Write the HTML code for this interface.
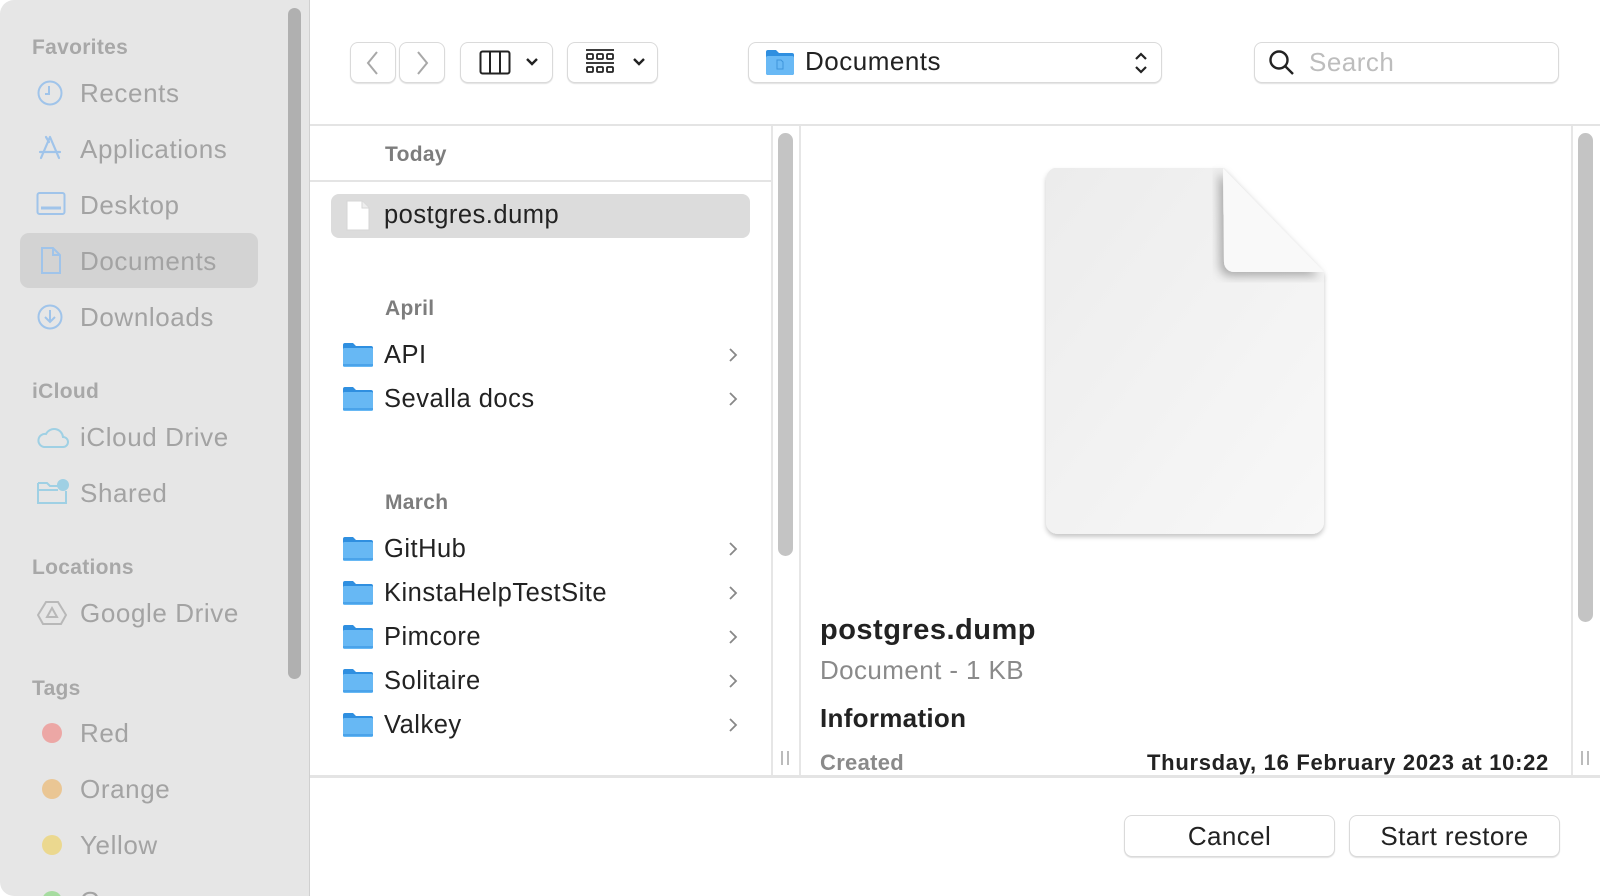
<!DOCTYPE html>
<html><head><meta charset="utf-8">
<style>
*{margin:0;padding:0;box-sizing:border-box}
html,body{width:1600px;height:896px;overflow:hidden;background:#fff;font-family:"Liberation Sans",sans-serif}
.a{position:absolute;white-space:nowrap}
#side{position:absolute;left:0;top:0;width:310px;height:896px;background:#e6e6e6;border-top-left-radius:14px;border-bottom-left-radius:14px;border-right:1px solid #d0d0d0;overflow:hidden}
.h{font-size:21px;font-weight:bold;color:#a8a8a8;line-height:26px;letter-spacing:.3px}
.it{font-size:26px;color:#a3a3a3;line-height:32px;letter-spacing:.6px}
.ic{position:absolute;left:36px}
.btn{position:absolute;background:#fff;border:1px solid #dadada;border-radius:8px;box-shadow:0 1px 1px rgba(0,0,0,.12)}
.row{font-size:25.5px;color:#222;line-height:32px;letter-spacing:.5px}
.sh{font-size:21px;font-weight:bold;color:#7d7d7d;line-height:26px;letter-spacing:.3px}
.chev{position:absolute;left:727px;width:12px;height:16px}
.fold{position:absolute;left:343px;width:30px;height:24px}
</style></head><body>
<div id="side">
  <div class="a" style="left:288px;top:8px;width:13px;height:671px;background:#b0b0b0;border-radius:7px"></div>
  <div class="a h" style="left:32px;top:35px">Favorites</div>
  <svg class="ic" style="top:79px" width="28" height="28" viewBox="0 0 28 28" fill="none" stroke="#a0c4ea" stroke-width="2"><circle cx="14" cy="14" r="11.5"/><path d="M13 7v8H9"/></svg>
  <div class="a it" style="left:80px;top:77px">Recents</div>
  <svg class="ic" style="top:134px" width="28" height="28" viewBox="0 0 28 28" fill="none" stroke="#a0c4ea" stroke-width="2.2" stroke-linecap="round"><path d="M14 3L5 24M14 3l9 21M4 18h20M10 3l3 5"/></svg>
  <div class="a it" style="left:80px;top:133px">Applications</div>
  <svg class="ic" style="top:191px" width="30" height="26" viewBox="0 0 30 26" fill="none" stroke="#a0c4ea" stroke-width="2"><rect x="1.5" y="2" width="27" height="21" rx="2"/><path d="M5 17h20" stroke-width="3"/></svg>
  <div class="a it" style="left:80px;top:189px">Desktop</div>
  <div class="a" style="left:20px;top:233px;width:238px;height:55px;background:#d3d3d3;border-radius:9px"></div>
  <svg class="ic" style="left:40px;top:246px" width="22" height="29" viewBox="0 0 22 29" fill="none" stroke="#a0c4ea" stroke-width="2"><path d="M2 2h11l7 7v18H2z M13 2v7h7"/></svg>
  <div class="a it" style="left:80px;top:245px">Documents</div>
  <svg class="ic" style="top:303px" width="28" height="28" viewBox="0 0 28 28" fill="none" stroke="#a0c4ea" stroke-width="2"><circle cx="14" cy="14" r="11.5"/><path d="M14 7v12M9 14l5 5 5-5"/></svg>
  <div class="a it" style="left:80px;top:301px">Downloads</div>
  <div class="a h" style="left:32px;top:379px">iCloud</div>
  <svg class="ic" style="top:424px" width="34" height="26" viewBox="0 0 34 26" fill="none" stroke="#9fd0e4" stroke-width="2"><path d="M8 23h19a5 5 0 0 0 0-10 9 9 0 0 0-17-3 6 6 0 0 0-2 13z"/></svg>
  <div class="a it" style="left:80px;top:421px">iCloud Drive</div>
  <svg class="ic" style="top:478px" width="34" height="28" viewBox="0 0 34 28" fill="none" stroke="#9fd0e4" stroke-width="2"><path d="M2 5h9l3 3h8 M2 5v20h28v-12 M2 12h20"/><circle cx="27" cy="7" r="5" fill="#9fd0e4"/></svg>
  <div class="a it" style="left:80px;top:477px">Shared</div>
  <div class="a h" style="left:32px;top:555px">Locations</div>
  <svg class="ic" style="left:37px;top:600px" width="30" height="26" viewBox="0 0 30 26" fill="none" stroke="#b8b8b8" stroke-width="2"><path d="M9 2h12l8 13-5 9H6l-5-9z M15 8l5 9H10z"/></svg>
  <div class="a it" style="left:80px;top:597px">Google Drive</div>
  <div class="a h" style="left:32px;top:676px">Tags</div>
  <div class="a" style="left:42px;top:723px;width:20px;height:20px;border-radius:50%;background:#eca7a5"></div>
  <div class="a it" style="left:80px;top:717px">Red</div>
  <div class="a" style="left:42px;top:779px;width:20px;height:20px;border-radius:50%;background:#eac694"></div>
  <div class="a it" style="left:80px;top:773px">Orange</div>
  <div class="a" style="left:42px;top:835px;width:20px;height:20px;border-radius:50%;background:#ebd88f"></div>
  <div class="a it" style="left:80px;top:829px">Yellow</div>
  <div class="a" style="left:42px;top:891px;width:20px;height:20px;border-radius:50%;background:#a6dca0"></div>
  <div class="a it" style="left:80px;top:885px">Green</div>
</div>

<!-- toolbar -->
<div class="btn" style="left:350px;top:42px;width:46px;height:41px"></div>
<div class="btn" style="left:399px;top:42px;width:46px;height:41px"></div>
<svg class="a" style="left:364px;top:50px" width="18" height="26" viewBox="0 0 18 26" fill="none" stroke="#a8a8a8" stroke-width="2"><path d="M13 2L4 13l9 11"/></svg>
<svg class="a" style="left:413px;top:50px" width="18" height="26" viewBox="0 0 18 26" fill="none" stroke="#a8a8a8" stroke-width="2"><path d="M5 2l9 11-9 11"/></svg>
<div class="btn" style="left:460px;top:42px;width:93px;height:41px"></div>
<svg class="a" style="left:479px;top:50px" width="32" height="25" viewBox="0 0 32 25" fill="none" stroke="#222" stroke-width="2"><rect x="1.5" y="1.5" width="29" height="22" rx="2"/><path d="M11 2v21M21 2v21"/></svg>
<svg class="a" style="left:525px;top:57px" width="14" height="10" viewBox="0 0 14 10" fill="none" stroke="#222" stroke-width="2.4"><path d="M2 2l5 5 5-5"/></svg>
<div class="btn" style="left:567px;top:42px;width:91px;height:41px"></div>
<svg class="a" style="left:585px;top:48px" width="30" height="28" viewBox="0 0 30 28" fill="none" stroke="#222" stroke-width="1.8"><path d="M1 2h28M1 15h28"/><rect x="2" y="6" width="6" height="5" rx="1"/><rect x="12" y="6" width="6" height="5" rx="1"/><rect x="22" y="6" width="6" height="5" rx="1"/><rect x="2" y="19" width="6" height="5" rx="1"/><rect x="12" y="19" width="6" height="5" rx="1"/><rect x="22" y="19" width="6" height="5" rx="1"/></svg>
<svg class="a" style="left:632px;top:57px" width="14" height="10" viewBox="0 0 14 10" fill="none" stroke="#222" stroke-width="2.4"><path d="M2 2l5 5 5-5"/></svg>
<div class="btn" style="left:748px;top:42px;width:414px;height:41px"></div>
<svg class="a" style="left:765px;top:49px" width="30" height="27" viewBox="0 0 30 27"><path d="M1 3a2 2 0 0 1 2-2h8l3 3h13a2 2 0 0 1 2 2v18a2 2 0 0 1-2 2H3a2 2 0 0 1-2-2z" fill="#2f8fe0"/><rect x="1" y="7" width="28" height="19" rx="2" fill="#69b9f5"/><path d="M12 11h4l2 2v7h-6z" fill="none" stroke="#3e95db" stroke-width="1"/></svg>
<div class="a" style="left:805px;top:44px;font-size:26px;line-height:34px;color:#222;letter-spacing:.5px">Documents</div>
<svg class="a" style="left:1134px;top:50px" width="14" height="26" viewBox="0 0 14 26" fill="none" stroke="#222" stroke-width="2.2"><path d="M2 9l5-5 5 5M2 17l5 5 5-5"/></svg>
<div class="btn" style="left:1254px;top:42px;width:305px;height:41px"></div>
<svg class="a" style="left:1268px;top:49px" width="28" height="28" viewBox="0 0 28 28" fill="none" stroke="#222" stroke-width="2.4"><circle cx="11" cy="11" r="8.5"/><path d="M17 17l8 8"/></svg>
<div class="a" style="left:1309px;top:45px;font-size:26px;line-height:34px;color:#bdbdbd;letter-spacing:.5px">Search</div>

<div class="a" style="left:310px;top:124px;width:1290px;height:2px;background:#e4e4e4"></div>

<!-- column 1 -->
<div class="a sh" style="left:385px;top:142px">Today</div>
<div class="a" style="left:310px;top:180px;width:462px;height:2px;background:#e4e4e4"></div>
<div class="a" style="left:331px;top:194px;width:419px;height:44px;background:#dcdcdc;border-radius:8px"></div>
<svg class="a" style="left:346px;top:200px" width="24" height="31" viewBox="0 0 24 31"><path d="M1 1h15l7 7v22H1z" fill="#fff" stroke="#d6d6d6"/><path d="M16 1v7h7" fill="#eee" stroke="#d6d6d6"/></svg>
<div class="a row" style="left:384px;top:199px">postgres.dump</div>

<div class="a sh" style="left:385px;top:296px">April</div>
<svg class="fold" style="top:343px" viewBox="0 0 30 24"><path d="M0 2a2 2 0 0 1 2-2h8l3 3h15a2 2 0 0 1 2 2v17H0z" fill="#2f8fe0"/><rect x="0" y="5" width="30" height="19" rx="1.5" fill="#67b8f4"/><rect x="0" y="21" width="30" height="2" fill="#4aa3ea"/></svg>
<div class="a row" style="left:384px;top:339px">API</div>
<svg class="chev" style="top:347px" viewBox="0 0 12 16" fill="none" stroke="#888" stroke-width="1.8"><path d="M3 2l6 6-6 6"/></svg>
<svg class="fold" style="top:387px" viewBox="0 0 30 24"><path d="M0 2a2 2 0 0 1 2-2h8l3 3h15a2 2 0 0 1 2 2v17H0z" fill="#2f8fe0"/><rect x="0" y="5" width="30" height="19" rx="1.5" fill="#67b8f4"/><rect x="0" y="21" width="30" height="2" fill="#4aa3ea"/></svg>
<div class="a row" style="left:384px;top:383px">Sevalla docs</div>
<svg class="chev" style="top:391px" viewBox="0 0 12 16" fill="none" stroke="#888" stroke-width="1.8"><path d="M3 2l6 6-6 6"/></svg>

<div class="a sh" style="left:385px;top:490px">March</div>
<svg class="fold" style="top:537px" viewBox="0 0 30 24"><path d="M0 2a2 2 0 0 1 2-2h8l3 3h15a2 2 0 0 1 2 2v17H0z" fill="#2f8fe0"/><rect x="0" y="5" width="30" height="19" rx="1.5" fill="#67b8f4"/><rect x="0" y="21" width="30" height="2" fill="#4aa3ea"/></svg>
<div class="a row" style="left:384px;top:533px">GitHub</div>
<svg class="chev" style="top:541px" viewBox="0 0 12 16" fill="none" stroke="#888" stroke-width="1.8"><path d="M3 2l6 6-6 6"/></svg>
<svg class="fold" style="top:581px" viewBox="0 0 30 24"><path d="M0 2a2 2 0 0 1 2-2h8l3 3h15a2 2 0 0 1 2 2v17H0z" fill="#2f8fe0"/><rect x="0" y="5" width="30" height="19" rx="1.5" fill="#67b8f4"/><rect x="0" y="21" width="30" height="2" fill="#4aa3ea"/></svg>
<div class="a row" style="left:384px;top:577px">KinstaHelpTestSite</div>
<svg class="chev" style="top:585px" viewBox="0 0 12 16" fill="none" stroke="#888" stroke-width="1.8"><path d="M3 2l6 6-6 6"/></svg>
<svg class="fold" style="top:625px" viewBox="0 0 30 24"><path d="M0 2a2 2 0 0 1 2-2h8l3 3h15a2 2 0 0 1 2 2v17H0z" fill="#2f8fe0"/><rect x="0" y="5" width="30" height="19" rx="1.5" fill="#67b8f4"/><rect x="0" y="21" width="30" height="2" fill="#4aa3ea"/></svg>
<div class="a row" style="left:384px;top:621px">Pimcore</div>
<svg class="chev" style="top:629px" viewBox="0 0 12 16" fill="none" stroke="#888" stroke-width="1.8"><path d="M3 2l6 6-6 6"/></svg>
<svg class="fold" style="top:669px" viewBox="0 0 30 24"><path d="M0 2a2 2 0 0 1 2-2h8l3 3h15a2 2 0 0 1 2 2v17H0z" fill="#2f8fe0"/><rect x="0" y="5" width="30" height="19" rx="1.5" fill="#67b8f4"/><rect x="0" y="21" width="30" height="2" fill="#4aa3ea"/></svg>
<div class="a row" style="left:384px;top:665px">Solitaire</div>
<svg class="chev" style="top:673px" viewBox="0 0 12 16" fill="none" stroke="#888" stroke-width="1.8"><path d="M3 2l6 6-6 6"/></svg>
<svg class="fold" style="top:713px" viewBox="0 0 30 24"><path d="M0 2a2 2 0 0 1 2-2h8l3 3h15a2 2 0 0 1 2 2v17H0z" fill="#2f8fe0"/><rect x="0" y="5" width="30" height="19" rx="1.5" fill="#67b8f4"/><rect x="0" y="21" width="30" height="2" fill="#4aa3ea"/></svg>
<div class="a row" style="left:384px;top:709px">Valkey</div>
<svg class="chev" style="top:717px" viewBox="0 0 12 16" fill="none" stroke="#888" stroke-width="1.8"><path d="M3 2l6 6-6 6"/></svg>

<!-- column scrollbar -->
<div class="a" style="left:771px;top:126px;width:2px;height:650px;background:#e6e6e6"></div>
<div class="a" style="left:799px;top:126px;width:2px;height:650px;background:#e6e6e6"></div>
<div class="a" style="left:778px;top:133px;width:15px;height:423px;background:#c4c4c4;border-radius:8px"></div>
<div class="a" style="left:781px;top:751px;width:2px;height:14px;background:#bbb"></div>
<div class="a" style="left:787px;top:751px;width:2px;height:14px;background:#bbb"></div>

<!-- preview -->
<svg class="a" style="left:1036px;top:160px" width="300" height="390" viewBox="0 0 300 390">
 <defs>
  <linearGradient id="g" x1="0" y1="0" x2="1" y2="1"><stop offset="0" stop-color="#ececec"/><stop offset="1" stop-color="#f8f8f8"/></linearGradient>
  <filter id="s" x="-10%" y="-10%" width="120%" height="120%"><feDropShadow dx="0" dy="3" stdDeviation="2.5" flood-color="#000" flood-opacity=".22"/></filter>
  <filter id="s2"><feDropShadow dx="-4" dy="4" stdDeviation="5" flood-color="#000" flood-opacity=".3"/></filter>
 </defs>
 <path d="M18 8h170l100 104v250a12 12 0 0 1-12 12H22a12 12 0 0 1-12-12V20a12 12 0 0 1 8-12z" fill="url(#g)" filter="url(#s)"/>
 <path d="M187 8l101 104H198a10 10 0 0 1-10-10z" fill="#f9f9f9" filter="url(#s2)"/>
</svg>
<div class="a" style="left:820px;top:612px;font-size:29px;font-weight:bold;color:#222;line-height:36px;letter-spacing:.5px">postgres.dump</div>
<div class="a" style="left:820px;top:654px;font-size:26px;color:#8a8a8a;line-height:32px;letter-spacing:.4px">Document - 1 KB</div>
<div class="a" style="left:820px;top:702px;font-size:26px;font-weight:bold;color:#222;line-height:32px;letter-spacing:.3px">Information</div>
<div class="a" style="left:820px;top:750px;font-size:22px;font-weight:bold;color:#8a8a8a;line-height:26px;letter-spacing:.3px">Created</div>
<div class="a" style="right:51px;top:750px;font-size:22px;font-weight:bold;color:#222;line-height:26px;letter-spacing:.7px">Thursday, 16 February 2023 at 10:22</div>
<div class="a" style="left:1571px;top:126px;width:2px;height:650px;background:#e6e6e6"></div>
<div class="a" style="left:1578px;top:133px;width:15px;height:489px;background:#c4c4c4;border-radius:8px"></div>
<div class="a" style="left:1581px;top:751px;width:2px;height:14px;background:#bbb"></div>
<div class="a" style="left:1587px;top:751px;width:2px;height:14px;background:#bbb"></div>
<div class="a" style="left:310px;top:775px;width:1290px;height:3px;background:#e4e4e4"></div>

<!-- buttons -->
<div class="btn" style="left:1124px;top:815px;width:211px;height:42px;font-size:26px;color:#222;text-align:center;line-height:40px;letter-spacing:.4px">Cancel</div>
<div class="btn" style="left:1349px;top:815px;width:211px;height:42px;font-size:26px;color:#222;text-align:center;line-height:40px;letter-spacing:.4px">Start restore</div>
</body></html>
